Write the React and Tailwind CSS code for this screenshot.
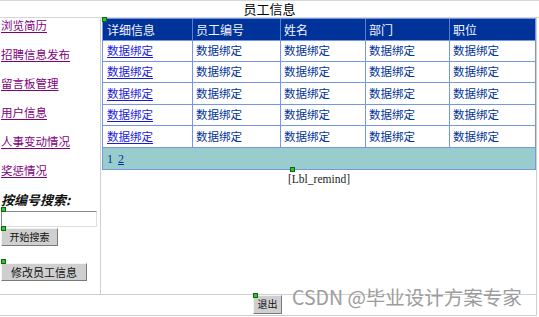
import React from "react";

const Marker = ({ className }) => (
  <span className={"absolute w-[5px] h-[5px] bg-[#33c233] border border-[#0b6b0b] " + className} />
);

const headers = ["详细信息", "员工编号", "姓名", "部门", "职位"];
const colW = ["w-[90px]", "w-[88px]", "w-[85px]", "w-[84px]", "flex-1"];
const rowH = ["h-[21px]", "h-[21px]", "h-[22px]", "h-[21px]", "h-[22px]"];
const links = ["浏览简历", "招聘信息发布", "留言板管理", "用户信息", "人事变动情况", "奖惩情况"];

export default function App() {
  return (
    <div className="relative w-[539px] h-[317px] bg-white overflow-hidden font-['Noto_Sans_CJK_SC',sans-serif] text-black">
      {/* title */}
      <div className="h-[18px] border-t border-b border-[#d6d6d6] text-center text-[13px] leading-[16px]">
        员工信息
      </div>
      <div className="w-[537px] border-r border-[#cfcfcf]">
        {/* middle row */}
        <div className="flex h-[277px] border-b border-[#cfcfcf]">
          {/* left column */}
          <div className="relative w-[101px] border-r border-[#cfcfcf] flex flex-col pl-[1px]">
            {links.map((t) => (
              <div key={t} className="h-[29px] leading-[14px] text-[11.5px]">
                <a className="text-[#800080] underline underline-offset-[2px] cursor-pointer">{t}</a>
              </div>
            ))}
            <div className="h-[19px] leading-[16px] text-[13px] font-bold italic text-[#111]">按编号搜索:</div>
            <input
              className="w-[96px] h-[16px] bg-white border border-t-[#8a8a8a] border-l-[#8a8a8a] border-r-[#dedede] border-b-[#dedede] outline-none"
              readOnly
            />
            <button className="mt-[1px] w-[57px] h-[18px] bg-[#cfcfcf] border border-t-[#f4f4f4] border-l-[#f4f4f4] border-r-[#7a7a7a] border-b-[#7a7a7a] text-[10px] leading-[14px] text-[#111] flex items-center justify-center">
              开始搜索
            </button>
            <button className="mt-[17px] w-[86px] h-[18px] bg-[#cfcfcf] border border-t-[#f4f4f4] border-l-[#f4f4f4] border-r-[#7a7a7a] border-b-[#7a7a7a] text-[11px] leading-[14px] text-[#111] flex items-center justify-center">
              修改员工信息
            </button>
            <Marker className="left-[1px] top-[189px]" />
            <Marker className="left-[1px] top-[208px]" />
            <Marker className="left-[1px] top-[241px]" />
          </div>
          {/* right cell */}
          <div className="relative flex-1 pl-[1px]">
            <div className="w-[434px] border border-[#7597e0] text-[11.5px]">
              <div className="flex h-[22px] bg-[#003399] border-b border-[#7597e0]">
                {headers.map((h, i) => (
                  <div
                    key={h}
                    className={colW[i] + " flex items-center text-[12px] text-[#f4f4ff] " + (i === 0 ? "pl-[4px] " : "pl-[3px] ") + (i < 4 ? "border-r border-[#5a7fd0]" : "")}
                  >
                    {h}
                  </div>
                ))}
              </div>
              {rowH.map((rh, r) => (
                <div key={r} className={"flex bg-white border-b border-[#7597e0] " + rh}>
                  {headers.map((h, i) => (
                    <div
                      key={h}
                      className={colW[i] + " flex items-center " + (i === 0 ? "pl-[4px] " : "pl-[3px] ") + (i < 4 ? "border-r border-[#7597e0]" : "")}
                    >
                      {i === 0 ? (
                        <a className="text-[#1a1add] underline underline-offset-[2px] cursor-pointer">数据绑定</a>
                      ) : (
                        <span className="text-[#003399]">数据绑定</span>
                      )}
                    </div>
                  ))}
                </div>
              ))}
              <div className="h-[21px] bg-[#99cccc] flex items-center pl-[4px] gap-[5px] text-[12px] font-['Liberation_Serif',serif] text-[#003399]">
                <span>1</span>
                <a className="underline cursor-pointer">2</a>
              </div>
            </div>
            <div className="mt-[2px] text-center text-[11.5px] leading-[14px] font-['Liberation_Serif',serif] text-[#222]">
              [Lbl_remind]
            </div>
            <Marker className="left-[1px] top-[-1px]" />
            <Marker className="left-[189px] top-[149px]" />
          </div>
        </div>
        {/* bottom row */}
        <div className="relative h-[21px] border-b border-[#cfcfcf] flex items-start">
          <button className="ml-[253px] w-[29px] h-[19px] bg-[#cfcfcf] border border-t-[#f4f4f4] border-l-[#f4f4f4] border-r-[#7a7a7a] border-b-[#7a7a7a] text-[10px] leading-[12px] text-[#111] flex items-end justify-center pb-[3px]">
            退出
          </button>
          <Marker className="left-[253px] top-[-2px]" />
        </div>
      </div>
      <div className="absolute left-[292px] top-[287px] text-[19.5px] leading-none text-[#9c9c9c] whitespace-nowrap">
        CSDN @毕业设计方案专家
      </div>
    </div>
  );
}
